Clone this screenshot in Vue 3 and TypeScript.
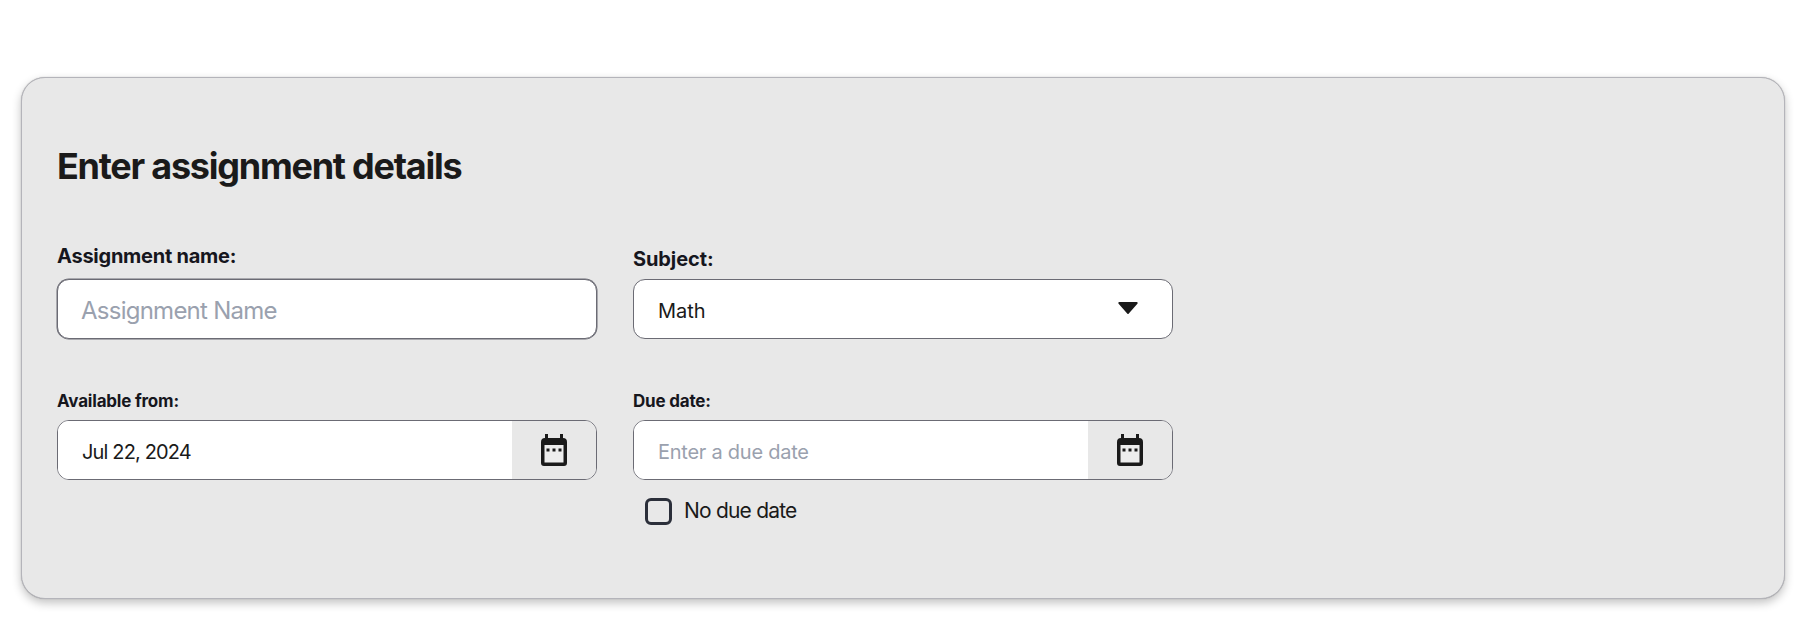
<script setup lang="ts">
import { ref } from 'vue'

const name = ref('')
const subject = ref('Math')
const availableFrom = ref('Jul 22, 2024')
const dueDate = ref('')
const noDueDate = ref(false)
</script>

<template>
  <div class="page">
    <section class="card">
      <h2 class="title">Enter assignment details</h2>

      <div class="grid">
        <div class="field first-row">
          <label class="label label-name" for="name">Assignment name:</label>
          <input id="name" v-model="name" class="control name-input" placeholder="Assignment Name" />
        </div>

        <div class="field first-row">
          <label class="label label-subject" for="subject">Subject:</label>
          <div class="select-wrap">
            <select id="subject" v-model="subject" class="control select">
              <option>Math</option>
              <option>Science</option>
              <option>History</option>
            </select>
            <svg class="caret" width="20" height="12" viewBox="0 0 20 12">
              <path d="M1.300 0h17.400a1 1 0 0 1 .7 1.700l-8.600 9.700a1 1 0 0 1-1.600 0L.6 1.700A1 1 0 0 1 1.300 0z" fill="#1a1a1a" />
            </svg>
          </div>
        </div>

        <div class="field">
          <label class="label label-small" for="from">Available from:</label>
          <div class="date-box">
            <input id="from" v-model="availableFrom" class="date-input" />
            <button class="date-btn" type="button" aria-label="Pick date">
              <svg width="26" height="32" viewBox="0 0 26 32">
                <path d="M4 0h3v4h12V0h3v4a4 4 0 0 1 4 4v21a3 3 0 0 1-3 3H3a3 3 0 0 1-3-3V8a4 4 0 0 1 4-4z" fill="#1a1a1a" />
                <rect x="3.500" y="11" width="19" height="17.500" fill="#ededed" />
                <rect x="5.500" y="14.500" width="3" height="3" fill="#1a1a1a" />
                <rect x="11.500" y="14.500" width="3" height="3" fill="#1a1a1a" />
                <rect x="17.500" y="14.500" width="3" height="3" fill="#1a1a1a" />
              </svg>
            </button>
          </div>
        </div>

        <div class="field">
          <label class="label label-small" for="due">Due date:</label>
          <div class="date-box">
            <input id="due" v-model="dueDate" class="date-input" placeholder="Enter a due date" />
            <button class="date-btn" type="button" aria-label="Pick date">
              <svg width="26" height="32" viewBox="0 0 26 32">
                <path d="M4 0h3v4h12V0h3v4a4 4 0 0 1 4 4v21a3 3 0 0 1-3 3H3a3 3 0 0 1-3-3V8a4 4 0 0 1 4-4z" fill="#1a1a1a" />
                <rect x="3.500" y="11" width="19" height="17.500" fill="#ededed" />
                <rect x="5.500" y="14.500" width="3" height="3" fill="#1a1a1a" />
                <rect x="11.500" y="14.500" width="3" height="3" fill="#1a1a1a" />
                <rect x="17.500" y="14.500" width="3" height="3" fill="#1a1a1a" />
              </svg>
            </button>
          </div>
          <label class="check-row">
            <input v-model="noDueDate" class="check" type="checkbox" />
            <span>No due date</span>
          </label>
        </div>
      </div>
    </section>
  </div>
</template>

<style scoped>
.page {
  padding: 77px 9px 20px 21px;
  font-family: Inter, "Liberation Sans", sans-serif;
  color: #1a1a1a;
}

.card {
  box-sizing: border-box;
  height: 522px;
  padding: 66px 35px 0;
  background: #e8e8e8;
  border: 1px solid #b4b4ba;
  border-radius: 24px;
  box-shadow: 0 4px 10px rgba(0, 0, 0, 0.24), 0 0 1px rgba(0, 0, 0, 0.3);
}

.title {
  margin: 0;
  font-size: 36px;
  line-height: 44px;
  font-weight: 700;
  letter-spacing: -1.25px;
}

.grid {
  display: grid;
  grid-template-columns: 540px 540px;
  column-gap: 36px;
  row-gap: 51px;
  margin-top: 56px;
}

.field {
  display: flex;
  flex-direction: column;
}

.first-row {
  justify-content: flex-end;
}

.label {
  font-weight: 700;
  color: #16161d;
}

.label-name {
  font-size: 20px;
  line-height: 24px;
  margin-bottom: 11px;
  letter-spacing: -0.25px;
}

.label-subject {
  font-size: 20px;
  line-height: 24px;
  margin-bottom: 8px;
  letter-spacing: -0.1px;
}

.label-small {
  font-size: 17px;
  line-height: 22px;
  margin-bottom: 8px;
  letter-spacing: -0.2px;
}

.control {
  box-sizing: border-box;
  width: 100%;
  height: 60px;
  border: 1px solid #6b6b74;
  border-radius: 12px;
  background: #fff;
  font-family: inherit;
  outline: none;
}

.name-input {
  padding: 3px 23px 0;
  font-size: 24px;
  letter-spacing: -0.75px;
  box-shadow: 0 0 0 0.5px #6b6b74;
}

.name-input::placeholder,
.date-input::placeholder {
  color: #9aa1ae;
  opacity: 1;
}

.date-input::placeholder {
  letter-spacing: -0.25px;
}

.select-wrap {
  position: relative;
}

.select {
  appearance: none;
  padding: 3px 24px 0;
  font-size: 20px;
  color: #1a1a1a;
}

.caret {
  position: absolute;
  top: 23px;
  right: 35px;
  pointer-events: none;
}

.date-box {
  display: flex;
  height: 60px;
  box-sizing: border-box;
  border: 1px solid #6b6b74;
  border-radius: 12px;
  overflow: hidden;
  background: #fff;
}

.date-input {
  flex: 1;
  min-width: 0;
  padding: 3px 24px 0;
  border: 0;
  outline: none;
  background: #fff;
  font-family: inherit;
  font-size: 20px;
  letter-spacing: -0.85px;
  color: #1a1a1a;
}

.date-btn {
  flex: none;
  display: flex;
  align-items: center;
  justify-content: center;
  width: 84px;
  padding: 0;
  border: 0;
  background: #e8e8e8;
}

.check-row {
  display: flex;
  align-items: center;
  gap: 12px;
  margin-top: 17px;
  padding-left: 12px;
  font-size: 21px;
  line-height: 28px;
  letter-spacing: -0.8px;
}

.check {
  appearance: none;
  box-sizing: border-box;
  width: 27px;
  height: 27px;
  margin: 0;
  border: 3px solid #2b2f3a;
  border-radius: 6px;
  background: transparent;
}
</style>

<style>
html,
body {
  background: #fff;
}
</style>
